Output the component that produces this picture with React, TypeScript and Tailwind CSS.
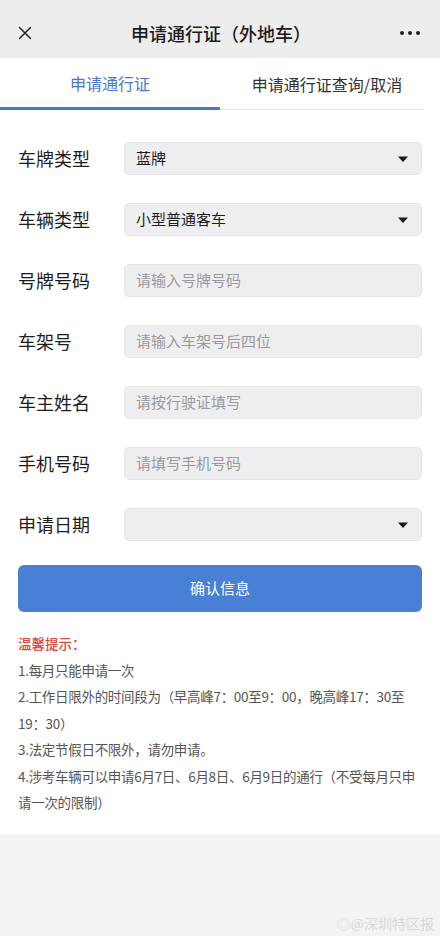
import { X } from 'lucide-react';

const fields = [
  { label: '车牌类型', value: '蓝牌', select: true },
  { label: '车辆类型', value: '小型普通客车', select: true },
  { label: '号牌号码', placeholder: '请输入号牌号码' },
  { label: '车架号', placeholder: '请输入车架号后四位' },
  { label: '车主姓名', placeholder: '请按行驶证填写' },
  { label: '手机号码', placeholder: '请填写手机号码' },
  { label: '申请日期', value: '', select: true },
];

const tips = [
  '1.每月只能申请一次',
  '2.工作日限外的时间段为（早高峰7：00至9：00，晚高峰17：30至',
  '19：30）',
  '3.法定节假日不限外，请勿申请。',
  '4.涉考车辆可以申请6月7日、6月8日、6月9日的通行（不受每月只申',
  '请一次的限制）',
];

function Caret() {
  return (
    <svg width="12" height="8" viewBox="0 0 12 8" className="shrink-0">
      <path d="M1 1.5h10L6 7z" fill="#1a1a1a" />
    </svg>
  );
}

export default function App() {
  return (
    <div
      className="w-[440px] h-[936px] bg-[#f3f3f4] flex flex-col overflow-hidden"
      style={{ fontFamily: '"Noto Sans CJK SC", "Noto Sans", sans-serif' }}
    >
      {/* Header */}
      <div className="h-[58px] bg-[#ededed] flex items-center px-[14px] pt-[8px] shrink-0">
        <X className="w-[22px] h-[22px] text-[#222]" strokeWidth={1.6} />
        <div className="flex-1 text-center text-[18px] font-medium text-[#1b1b1b] pl-[6px]">
          申请通行证（外地车）
        </div>
        <div className="flex gap-[4px] pr-[6px]">
          <span className="w-[4px] h-[4px] rounded-full bg-[#222]" />
          <span className="w-[4px] h-[4px] rounded-full bg-[#222]" />
          <span className="w-[4px] h-[4px] rounded-full bg-[#222]" />
        </div>
      </div>

      <div className="bg-white flex flex-col">
        {/* Tabs */}
        <div className="flex h-[52px] pr-[16px]">
          <div className="w-[220px] flex items-center justify-center text-[16px] text-[#4a7ac6] border-b-[3px] border-[#4a78c4]">
            申请通行证
          </div>
          <div className="flex-1 flex items-center justify-center text-[16px] text-[#333] border-b border-[#e2e2e2] pl-[10px]">
            申请通行证查询/取消
          </div>
        </div>

        {/* Form */}
        <div className="flex flex-col px-[18px] pt-[32px] gap-[28px]">
          {fields.map((f) => (
            <div key={f.label} className="flex items-center h-[33px]">
              <div className="w-[106px] text-[18px] text-[#1d1d1d]">{f.label}</div>
              <div className="flex-1 h-[33px] rounded-[5px] bg-[#eeeef1] border border-[#e6e6ea] flex items-center justify-between pl-[11px] pr-[12px]">
                <span className={`text-[15px] ${f.placeholder ? 'text-[#9a9a9e]' : 'text-[#1d1d1d]'}`}>
                  {f.placeholder ?? f.value}
                </span>
                {f.select && <Caret />}
              </div>
            </div>
          ))}
        </div>

        {/* Submit */}
        <div className="px-[18px] pt-[24px]">
          <button className="w-full h-[47px] rounded-[6px] bg-[#4a7fd6] text-white text-[15px]">
            确认信息
          </button>
        </div>

        {/* Tips */}
        <div className="px-[18px] pt-[18px] pb-[18px] text-[13.5px] leading-[26.5px] text-[#555]">
          <div className="text-[#d8483d] font-medium">温馨提示：</div>
          {tips.map((t) => (
            <div key={t} className="whitespace-nowrap tracking-[-0.3px]">
              {t}
            </div>
          ))}
        </div>
      </div>

      <div className="flex-1 flex items-end justify-end pr-[6px] pb-[2px]">
        <span className="text-[14px] text-[#d9d9dc]">◎@深圳特区报</span>
      </div>
    </div>
  );
}
